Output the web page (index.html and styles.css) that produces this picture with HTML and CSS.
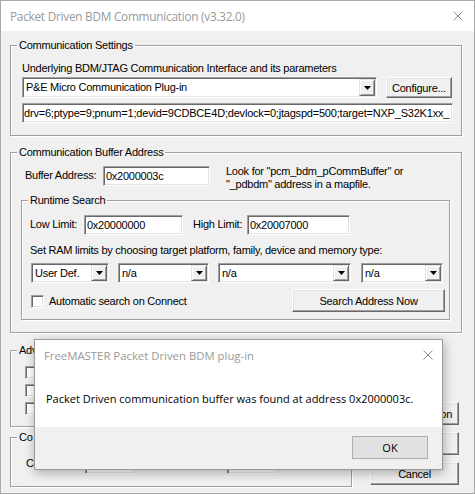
FILE: index.html
```html
<!DOCTYPE html>
<html>
<head>
<meta charset="utf-8">
<title>Packet Driven BDM Communication</title>
<link rel="stylesheet" href="styles.css">
</head>
<body>
<div class="window">
  <div class="titlebar">
    <span class="title">Packet Driven BDM Communication (v3.32.0)</span>
    <svg class="close" width="10" height="10" viewBox="0 0 10 10"><path d="M0.5 0.5 L9.5 9.5 M9.5 0.5 L0.5 9.5" stroke="#8a8a8a" stroke-width="1" fill="none"/></svg>
  </div>
  <div class="client">
    <div class="group g-comm">
      <div class="legend">Communication Settings</div>
      <div class="gbody gb-comm">
        <div class="label l-iface">Underlying BDM/JTAG Communication Interface and its parameters</div>
        <div class="row r-plugin">
          <div class="combo c-plugin"><span class="combo-text">P&amp;E Micro Communication Plug-in</span><span class="combo-btn"><svg width="7" height="4" viewBox="0 0 7 4"><polygon points="0,0 7,0 3.5,4" fill="#000"/></svg></span></div>
          <div class="btn b-config">Configure...</div>
        </div>
        <div class="edit e-params">drv=6;ptype=9;pnum=1;devid=9CDBCE4D;devlock=0;jtagspd=500;target=NXP_S32K1xx_</div>
      </div>
    </div>

    <div class="group g-buf">
      <div class="legend">Communication Buffer Address</div>
      <div class="gbody gb-buf">
        <div class="row r-buf">
          <span class="label l-buf">Buffer Address:</span>
          <div class="edit e-buf">0x2000003c</div>
          <div class="hint">Look for "pcm_bdm_pCommBuffer" or<br>"_pdbdm" address in a mapfile.</div>
        </div>
        <div class="group g-rt">
          <div class="legend">Runtime Search</div>
          <div class="gbody gb-rt">
            <div class="row r-limits">
              <span class="label l-low">Low Limit:</span>
              <div class="edit e-low">0x20000000</div>
              <span class="label l-high">High Limit:</span>
              <div class="edit e-high">0x20007000</div>
            </div>
            <div class="label l-ram">Set RAM limits by choosing target platform, family, device and memory type:</div>
            <div class="row r-combos">
              <div class="combo c-plat"><span class="combo-text">User Def.</span><span class="combo-btn"><svg width="7" height="4" viewBox="0 0 7 4"><polygon points="0,0 7,0 3.5,4" fill="#000"/></svg></span></div>
              <div class="combo c-fam"><span class="combo-text">n/a</span><span class="combo-btn"><svg width="7" height="4" viewBox="0 0 7 4"><polygon points="0,0 7,0 3.5,4" fill="#000"/></svg></span></div>
              <div class="combo c-dev"><span class="combo-text">n/a</span><span class="combo-btn"><svg width="7" height="4" viewBox="0 0 7 4"><polygon points="0,0 7,0 3.5,4" fill="#000"/></svg></span></div>
              <div class="combo c-mem"><span class="combo-text">n/a</span><span class="combo-btn"><svg width="7" height="4" viewBox="0 0 7 4"><polygon points="0,0 7,0 3.5,4" fill="#000"/></svg></span></div>
            </div>
            <div class="row r-auto">
              <span class="check"></span>
              <span class="label l-auto">Automatic search on Connect</span>
              <div class="btn b-search">Search Address Now</div>
            </div>
          </div>
        </div>
      </div>
    </div>

    <div class="lower">
      <div class="lower-left">
        <div class="group g-adv">
          <div class="legend">Adv</div>
          <div class="gbody gb-adv">
            <div class="crow"><span class="check"></span></div>
            <div class="crow"><span class="check"></span></div>
            <div class="crow"><span class="check"></span></div>
          </div>
        </div>
        <div class="group g-con">
          <div class="legend">Co</div>
          <div class="gbody gb-con">
            <span class="label l-con">Co</span>
            <div class="edit e-small e-small1"></div>
            <div class="edit e-small e-small2"></div>
          </div>
        </div>
      </div>
      <div class="lower-right">
        <div class="btn b-side">Test Connection</div>
        <div class="btn b-side"></div>
        <div class="btn b-side">Cancel</div>
      </div>
    </div>
  </div>

  <div class="msgbox">
    <div class="msg-title">
      <span class="msg-caption">FreeMASTER Packet Driven BDM plug-in</span>
      <svg class="msg-close" width="10" height="10" viewBox="0 0 10 10"><path d="M0.5 0.5 L9.5 9.5 M9.5 0.5 L0.5 9.5" stroke="#8a8a8a" stroke-width="1" fill="none"/></svg>
    </div>
    <div class="msg-body">Packet Driven communication buffer was found at address 0x2000003c.</div>
    <div class="msg-foot"><div class="msg-ok">OK</div></div>
  </div>
</div>
</body>
</html>
```

FILE: styles.css
```css
* { box-sizing: border-box; }
html, body { margin: 0; padding: 0; }
body {
  width: 475px; height: 494px; overflow: hidden;
  background: #f0f0f0;
  font-family: "Liberation Sans", Arial, sans-serif;
  font-size: 11px; letter-spacing: -0.25px; color: #000;
}
.window {
  position: relative; width: 475px; height: 494px;
  border: 1px solid #a9a9a9; background: #f0f0f0;
  display: flex; flex-direction: column;
}
.titlebar {
  height: 30px; flex: none; background: #fff;
  display: flex; align-items: center; padding: 0 11px 0 9px;
}
.title {
  font-family: "Open Sans", "Noto Sans", sans-serif;
  font-size: 11.8px; letter-spacing: -0.25px; color: #999;
}
.close { margin-left: auto; }
.client { padding: 14px 0 0 9px; display: flex; flex-direction: column; }

/* group boxes */
.group {
  display: flex; flex-direction: column;
  border: 1px solid #a0a0a0;
  box-shadow: inset 1px 1px 0 #fff, 1px 1px 0 #fff;
}
.legend {
  align-self: flex-start; margin: -7px 0 0 6px; padding: 0 2px;
  height: 13px; line-height: 13px; background: #f0f0f0; white-space: nowrap;
}
.label { line-height: 13px; white-space: nowrap; }
.row { display: flex; align-items: flex-start; }

/* controls */
.edit {
  height: 20px; background: #fff; white-space: nowrap; overflow: hidden;
  border: 1px solid; border-color: #a0a0a0 #fff #fff #a0a0a0;
  box-shadow: inset 1px 1px 0 #696969, inset -1px -1px 0 #e3e3e3;
  padding: 0 2px 0 2px; line-height: 18px;
}
.combo {
  height: 20px; background: #fff; display: flex; align-items: stretch;
  border: 1px solid; border-color: #a0a0a0 #fff #fff #a0a0a0;
  box-shadow: inset 1px 1px 0 #696969, inset -1px -1px 0 #e3e3e3;
  padding: 1px;
}
.combo-text { flex: 1; padding-left: 2px; line-height: 16px; white-space: nowrap; overflow: hidden; }
.combo-btn {
  width: 16px; flex: none; background: #f0f0f0;
  border: 1px solid; border-color: #e3e3e3 #696969 #696969 #e3e3e3;
  box-shadow: inset 1px 1px 0 #fff, inset -1px -1px 0 #a0a0a0;
  display: flex; align-items: center; justify-content: center;
}
.combo-btn svg { display: block; }
.btn {
  background: #f0f0f0; text-align: center; white-space: nowrap;
  border: 1px solid; border-color: #fff #696969 #696969 #fff;
  box-shadow: inset -1px -1px 0 #a0a0a0, inset 1px 1px 0 #e3e3e3;
  display: flex; align-items: center; justify-content: center;
}
.check {
  width: 13px; height: 13px; flex: none; background: #fff;
  border: 1px solid; border-color: #a0a0a0 #fff #fff #a0a0a0;
  box-shadow: inset 1px 1px 0 #696969, inset -1px -1px 0 #e3e3e3;
}

/* group 1 */
.g-comm { width: 452px; }
.gb-comm { padding: 10px 8px 12px 11px; }
.r-plugin { margin-top: 2px; }
.c-plugin { width: 355px; height: 21px; }
.b-config { width: 66px; height: 21px; margin-left: 9px; }
.e-params { margin-top: 5px; width: 431px; padding: 0 0 0 1px; letter-spacing: -0.2px; }

/* group 2 */
.g-buf { width: 452px; margin-top: 16px; }
.gb-buf { padding: 7px 11px 12px 10px; }
.l-buf { width: 78px; margin: 3px 0 0 4px; }
.e-buf { width: 107px; }
.hint { margin: -1px 0 0 16px; line-height: 13px; white-space: nowrap; }
.g-rt { margin-top: 9px; }
.gb-rt { padding: 8px 4px 7px 8px; }
.l-low { width: 54px; margin-top: 3px; }
.e-low { width: 99px; }
.l-high { width: 54px; margin: 3px 0 0 10px; }
.e-high { width: 103px; }
.l-ram { margin-top: 9px; }
.r-combos { margin-top: 6px; padding-left: 1px; gap: 9px; }
.c-plat { width: 78px; }
.c-fam { width: 91px; }
.c-dev { width: 133px; }
.c-mem { width: 82px; margin-left: 1px; }
.r-auto { margin-top: 6px; padding-left: 1px; }
.r-auto .check { margin-top: 6px; }
.l-auto { margin: 6px 0 0 5px; }
.b-search { width: 153px; height: 23px; margin-left: auto; }

/* lower area */
.lower { display: flex; margin-top: 17px; }
.lower-left { width: 342px; display: flex; flex-direction: column; }
.g-adv { height: 77px; }
.gb-adv { padding: 9px 0 0 14px; display: flex; flex-direction: column; gap: 5px; }
.crow { display: flex; align-items: center; gap: 5px; }
.g-con { height: 50px; margin-top: 10px; }
.gb-con { padding: 0 0 0 15px; display: flex; align-items: flex-start; }
.l-con { width: 59px; margin-top: 13px; }
.e-small { width: 49px; height: 20px; margin-top: 10px; }
.e-small2 { margin-left: 93px; }
.lower-right {
  width: 89px; margin-left: 18px; padding-top: 52px;
  display: flex; flex-direction: column; gap: 7px;
}
.b-side { height: 23px; }

/* message box overlay */
.msgbox {
  position: absolute; left: 33px; top: 338px; width: 409px; height: 131px;
  background: #fff; border: 1px solid #9a9a9a;
  box-shadow: 1px 3px 10px rgba(0,0,0,0.3);
  display: flex; flex-direction: column;
  font-family: "Open Sans", "Noto Sans", sans-serif; font-size: 11px; letter-spacing: 0;
}
.msg-title { height: 30px; flex: none; display: flex; align-items: center; padding: 0 9px 0 9px; }
.msg-caption { color: #999; font-size: 11.35px; }
.msg-close { margin-left: auto; }
.msg-body { height: 57px; flex: none; padding: 21px 0 0 11px; line-height: 16px; color: #000; white-space: nowrap; }
.msg-foot { flex: 1; background: #f0f0f0; display: flex; justify-content: flex-end; align-items: flex-start; padding: 9px 14px 0 0; }
.msg-ok {
  width: 76px; height: 23px; background: #e1e1e1; border: 1px solid #adadad;
  display: flex; align-items: center; justify-content: center;
}
```
